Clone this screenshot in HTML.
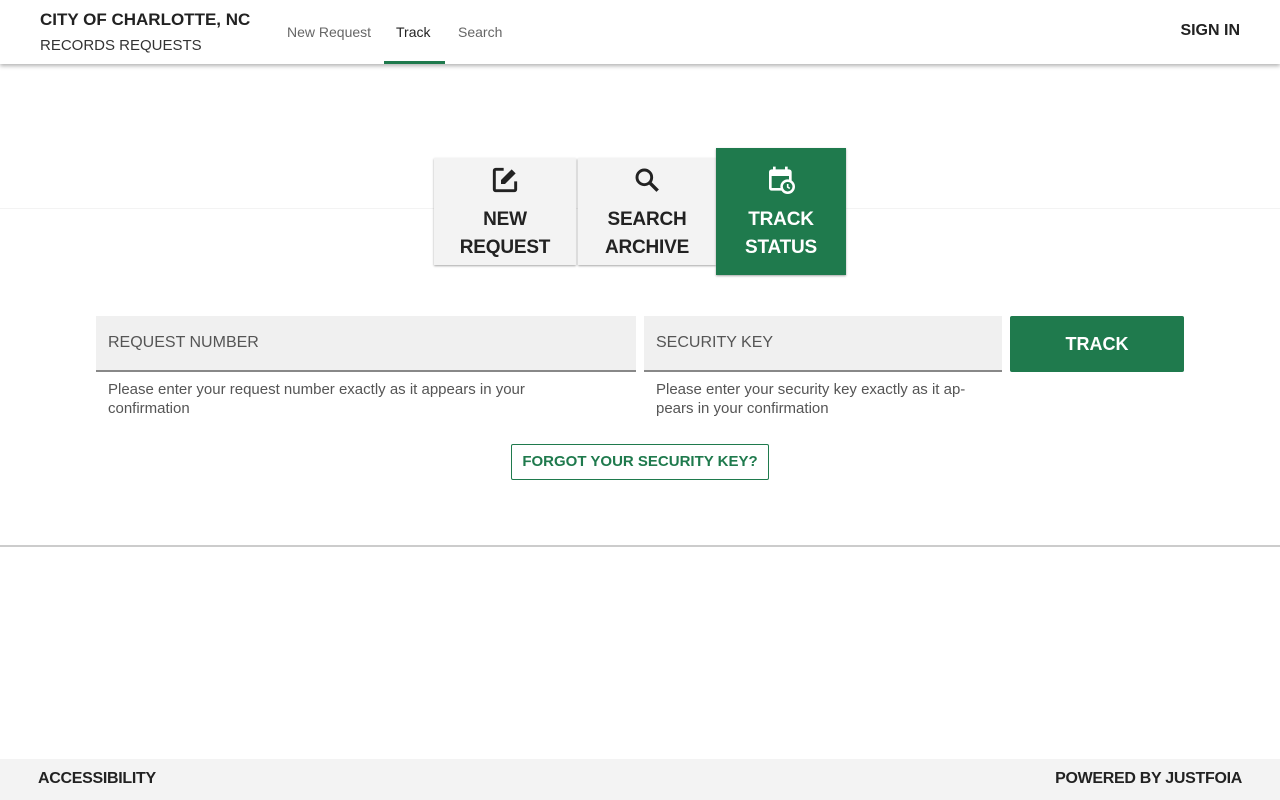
<!DOCTYPE html>
<html><head><style>
*{box-sizing:border-box;margin:0;padding:0}
body{width:1280px;height:800px;position:relative;font-family:"Liberation Sans",sans-serif;background:#fff;overflow:hidden;color:#222}
.hdr{position:absolute;left:0;top:0;width:1280px;height:64px;background:#fff;box-shadow:0 2px 4px rgba(0,0,0,.3)}
.t1{position:absolute;left:40px;top:10px;font-size:17px;font-weight:bold;color:#222}
.t2{position:absolute;left:40px;top:37px;font-size:15px;color:#333}
.nav{position:absolute;top:24px;font-size:14px;color:#666}
.ul{position:absolute;left:384px;top:61px;width:61px;height:3px;background:#1f7a4d}
.signin{position:absolute;right:40px;top:22px;font-size:16px;font-weight:bold;color:#222}
.line{position:absolute;left:0;top:208px;width:1280px;height:1px;background:#f3f3f3}
.tab{position:absolute;background:#f3f3f3;box-shadow:0 1px 2px rgba(0,0,0,.35);text-align:center;font-weight:bold;font-size:19px;line-height:28px;color:#222;letter-spacing:-0.2px}
.tab svg{display:block;margin:0 auto 10px}
.field{position:absolute;top:316px;height:56px;background:#f0f0f0;border-bottom:2px solid #888;font-size:16px;color:#555;padding:18px 12px}
.help{position:absolute;top:380px;font-size:15px;color:#555;line-height:19px}
.btn{position:absolute;left:1010px;top:316px;width:174px;height:56px;background:#1f7a4d;color:#fff;font-weight:bold;font-size:18px;text-align:center;line-height:56px;border-radius:2px}
.forgot{position:absolute;left:511px;top:444px;width:258px;height:36px;border:1px solid #1f7a4d;color:#1f7a4d;font-weight:bold;font-size:15px;text-align:center;line-height:34px;border-radius:2px}
.sep{position:absolute;left:0;top:545px;width:1280px;height:2px;background:#ccc}
.ftr{position:absolute;left:0;top:759px;width:1280px;height:41px;background:#f3f3f3;font-weight:bold;font-size:16px;letter-spacing:-0.3px}
</style></head><body>
<div class="hdr">
<div class="t1">CITY OF CHARLOTTE, NC</div>
<div class="t2">RECORDS REQUESTS</div>
<div class="nav" style="left:287px">New Request</div>
<div class="nav" style="left:396px;color:#222">Track</div>
<div class="nav" style="left:458px">Search</div>
<div class="ul"></div>
<div class="signin">SIGN IN</div>
</div>
<div class="line"></div>
<div class="tab" style="left:434px;top:158px;width:142px;height:107px;padding-top:6px">
<svg width="32" height="32" viewBox="0 0 24 24"><path d="M11 4H5a1 1 0 0 0-1 1v14a1 1 0 0 0 1 1h14a1 1 0 0 0 1-1v-6" fill="none" stroke="#222" stroke-width="2.2"/><path d="M9 15v-3l8-8 3 3-8 8z" fill="#222"/></svg>NEW<br>REQUEST</div>
<div class="tab" style="left:578px;top:158px;width:138px;height:107px;padding-top:6px">
<svg width="32" height="32" viewBox="0 0 24 24"><circle cx="10" cy="10" r="5.5" fill="none" stroke="#222" stroke-width="2.2"/><path d="M14 14l6 6" stroke="#222" stroke-width="2.6"/></svg>SEARCH<br>ARCHIVE</div>
<div class="tab" style="left:716px;top:148px;width:130px;height:127px;padding-top:16px;background:#1f7a4d;color:#fff">
<svg width="32" height="32" viewBox="0 0 24 24"><path d="M7 2v3M16 2v3" stroke="#fff" stroke-width="2"/><rect x="3" y="4" width="17" height="16" rx="2" fill="#fff"/><rect x="5" y="9" width="13" height="9" fill="#1f7a4d"/><circle cx="17" cy="17" r="5.5" fill="#fff"/><circle cx="17" cy="17" r="3.6" fill="#1f7a4d"/><path d="M17 15v2.3l1.6 1" stroke="#fff" stroke-width="1.2" fill="none"/></svg>TRACK<br>STATUS</div>
<div class="field" style="left:96px;width:540px">REQUEST NUMBER</div>
<div class="field" style="left:644px;width:358px">SECURITY KEY</div>
<div class="btn">TRACK</div>
<div class="help" style="left:108px;width:470px">Please enter your request number exactly as it appears in your confirmation</div>
<div class="help" style="left:656px;width:340px">Please enter your security key exactly as it ap-<br>pears in your confirmation</div>
<div class="forgot">FORGOT YOUR SECURITY KEY?</div>
<div class="sep"></div>
<div class="ftr"><span style="position:absolute;left:38px;top:11px">ACCESSIBILITY</span><span style="position:absolute;right:38px;top:11px">POWERED BY JUSTFOIA</span></div>
</body></html>
